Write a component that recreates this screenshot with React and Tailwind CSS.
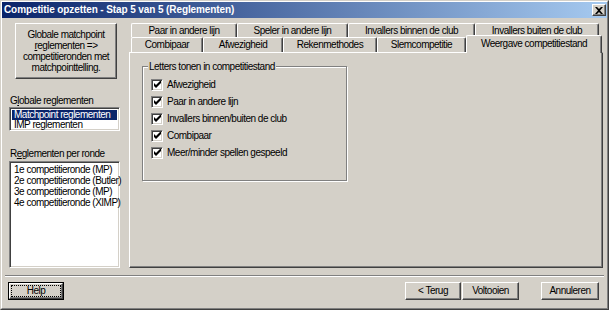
import React from "react";

const raised =
  "border border-t-white border-l-white border-r-[#404040] border-b-[#404040] shadow-[inset_-1px_-1px_#808080]";
const sunken =
  "border border-t-[#808080] border-l-[#808080] border-r-white border-b-white shadow-[inset_1px_1px_#404040,inset_-1px_-1px_#d4d0c8]";

function Check({ label }) {
  return (
    <div className="h-[17px] flex items-center">
      <div className={`w-[12px] h-[12px] bg-white flex items-center justify-center ${sunken}`}>
        <svg width="7" height="7" viewBox="0 0 7 7">
          <path d="M0 2v3l2 2l5-5v-3l-5 5z" fill="#000" />
        </svg>
      </div>
      <span className="ml-[4px] whitespace-nowrap">{label}</span>
    </div>
  );
}

function Tab({ w, children }) {
  return (
    <div
      className="h-full flex items-center justify-center border-t border-l border-t-white border-l-white border-r border-r-[#404040] shadow-[inset_-1px_0_#808080] rounded-tl-[2px] rounded-tr-[2px] whitespace-nowrap"
      style={{ width: w }}
    >
      {children}
    </div>
  );
}

function Btn({ w, children, def }) {
  if (def) {
    return (
      <div className="h-[18px] border border-black" style={{ width: w }}>
        <div className={`h-full p-[1px] ${raised}`}>
          <div className="w-full h-full border border-dotted border-black flex items-center justify-center">
            {children}
          </div>
        </div>
      </div>
    );
  }
  return (
    <div className={`h-[18px] flex items-center justify-center whitespace-nowrap ${raised}`} style={{ width: w }}>
      {children}
    </div>
  );
}

const row = "h-[11px] flex items-center pl-[2px] whitespace-nowrap";

export default function App() {
  return (
    <div className="w-[609px] h-[310px] bg-[#d4d0c8] border border-t-[#d4d0c8] border-l-[#d4d0c8] border-r-[#404040] border-b-[#404040] font-['Liberation_Sans',Arial,sans-serif] text-[10px] tracking-[-0.5px] leading-none text-black">
      <div className="h-full flex flex-col border border-t-white border-l-white border-r-[#808080] border-b-[#808080]">
        {/* Title bar */}
        <div className="h-[16px] flex items-center justify-between pl-[2px] pr-[1px] bg-[linear-gradient(to_right,#0a246a,#a6caf0)]">
          <span className="text-white font-bold text-[10px] tracking-[-0.1px] whitespace-nowrap">
            Competitie opzetten - Stap 5 van 5 (Reglementen)
          </span>
          <div className={`w-[14px] h-[12px] bg-[#d4d0c8] flex items-center justify-center ${raised}`}>
            <svg width="8" height="7" viewBox="0 0 8 7">
              <path d="M0 0h2l2 2l2-2h2l-3 3.5l3 3.5h-2l-2-2l-2 2h-2l3-3.5z" fill="#000" />
            </svg>
          </div>
        </div>

        {/* Main */}
        <div className="flex mt-[5px] h-[245px] pl-[7px] gap-[9px]">
          {/* Left column */}
          <div className="w-[111px] flex flex-col">
            <div className={`ml-[6px] w-[102px] h-[56px] flex flex-col items-center justify-center leading-[11px] text-center whitespace-nowrap ${raised}`}>
              <span>Globale matchpoint</span>
              <span>
                <span className="underline">r</span>eglementen =&gt;
              </span>
              <span>competitieronden met</span>
              <span>matchpointtelling.</span>
            </div>
            <div className="mt-[15px] h-[13px] flex items-center pl-[1px] whitespace-nowrap">
              G<span className="underline">l</span>obale reglementen
            </div>
            <div className={`h-[24px] bg-white p-[2px] ${sunken}`}>
              <div className="h-[10px] bg-[#0a246a] text-white flex items-center pl-[2px] whitespace-nowrap">
                Matchpoint reglementen
              </div>
              <div className="h-[10px] flex items-center pl-[2px] whitespace-nowrap">IMP reglementen</div>
            </div>
            <div className="mt-[16px] h-[13px] flex items-center pl-[1px] whitespace-nowrap">
              R<span className="underline">e</span>glementen per ronde
            </div>
            <div className={`mt-[1px] h-[107px] bg-white p-[2px] ${sunken}`}>
              <div className={row}>1e competitieronde (MP)</div>
              <div className={row}>2e competitieronde (Butler)</div>
              <div className={row}>3e competitieronde (MP)</div>
              <div className={row}>4e competitieronde (XIMP)</div>
            </div>
          </div>

          {/* Right column: tabs */}
          <div className="w-[474px] flex flex-col">
            <div className="h-[14px] flex ml-[2px]">
              <Tab w={106}>Paar in andere lijn</Tab>
              <Tab w={111}>Speler in andere lijn</Tab>
              <Tab w={127}>Invallers binnen de club</Tab>
              <Tab w={124}>Invallers buiten de club</Tab>
            </div>
            <div className="h-[15px] flex items-end ml-[2px]">
              <Tab w={72}>Combipaar</Tab>
              <Tab w={80}>Afwezigheid</Tab>
              <Tab w={94}>Rekenmethodes</Tab>
              <Tab w={89}>Slemcompetitie</Tab>
              <div className="relative z-10 w-[136px] h-[18px] -mb-[1px] self-end bg-[#d4d0c8] flex items-start justify-center pt-[3px] border-t border-l border-t-white border-l-white border-r border-r-[#404040] shadow-[inset_-1px_0_#808080] rounded-tl-[2px] rounded-tr-[2px] whitespace-nowrap">
                Weergave competitiestand
              </div>
            </div>
            <div className="flex-1 border-t border-l border-t-white border-l-white border-r border-b border-r-[#404040] border-b-[#404040] shadow-[inset_-1px_-1px_#808080] pl-[12px] pt-[13px]">
              <div className="relative w-[205px] h-[115px] border border-[#808080] shadow-[1px_1px_0_#fff,inset_1px_1px_0_#fff] pl-[8px] pt-[9px]">
                <span className="absolute -top-[6px] left-[5px] bg-[#d4d0c8] px-[1px] leading-[11px] whitespace-nowrap">
                  Letters tonen in competitiestand
                </span>
                <Check label="Afwezigheid" />
                <Check label="Paar in andere lijn" />
                <Check label="Invallers binnen/buiten de club" />
                <Check label="Combipaar" />
                <Check label="Meer/minder spellen gespeeld" />
              </div>
            </div>
          </div>
        </div>

        {/* Separator */}
        <div className="mt-[7px] mx-[3px] h-[2px] border-t border-t-[#808080] border-b border-b-white" />

        {/* Buttons */}
        <div className="mt-[5px] flex pl-[6px] pr-[8px]">
          <Btn w={56} def>
            Help
          </Btn>
          <div className="flex-1" />
          <Btn w={56}>&lt; Terug</Btn>
          <div className="w-[1px]" />
          <Btn w={57}>Voltooien</Btn>
          <div className="w-[22px]" />
          <Btn w={58}>Annuleren</Btn>
        </div>
      </div>
    </div>
  );
}
